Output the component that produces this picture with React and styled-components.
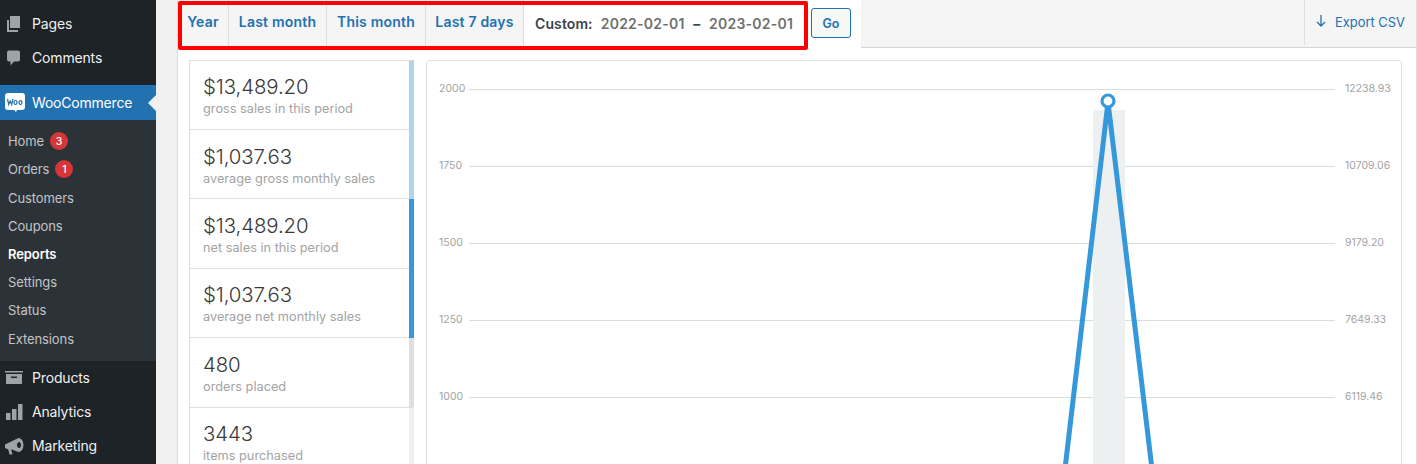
import React from "react";
import styled, { createGlobalStyle } from "styled-components";

const Global = createGlobalStyle`
  html, body { margin: 0; padding: 0; background: #f0f0f1; }
  * { box-sizing: border-box; }
`;

const Page = styled.div`
  width: 1417px; height: 464px; overflow: hidden; display: flex; position: relative;
  font-family: Inter, "Noto Sans", sans-serif; background: #f0f0f1;
`;
const Sidebar = styled.nav`
  width: 156px; flex: none; background: #1d2327; padding-top: 7px; height: 464px; overflow: hidden;
`;
const MenuItem = styled.div`
  height: 34px; display: flex; align-items: center; position: relative;
  padding-left: 32px; padding-bottom: 2px;
  font-size: 14px; color: #f0f0f1; letter-spacing: -0.16px;
  background: ${p => p.$active ? "#2271b1" : "transparent"};
  ${p => p.$active && "height:35px; margin-top:10px; color:#fff; padding-bottom:0; letter-spacing:-0.2px;"}
`;
const MenuIcon = styled.svg`
  position: absolute; left: 5px; top: 7px; width: 20px; height: 20px; fill: #9ea3a8;
`;
const Notch = styled.span`
  position: absolute; right: 0; top: 10px; width: 0; height: 0;
  border-top: 8px solid transparent; border-bottom: 8px solid transparent; border-right: 8px solid #f0f0f1;
`;
const SubMenu = styled.div`
  background: #2c3338; height: 241px; padding-top: 7.2px;
`;
const SubItem = styled.div`
  height: 28.2px; display: flex; align-items: center; padding-left: 8px; gap: 6px;
  font-size: 13px; letter-spacing: -0.1px; color: ${p => p.$current ? "#fff" : "#c3c4c7"};
  font-weight: ${p => p.$current ? 600 : 400};
`;
const Badge = styled.span`
  width: 18px; height: 18px; border-radius: 50%; background: #d63638; color: #fff;
  font-size: 10.5px; display: flex; align-items: center; justify-content: center; font-weight: 500;
`;
const Main = styled.main`
  flex: 1; padding-left: 21px; display: flex; min-width: 0;
`;
const Panel = styled.div`
  flex: 1; background: #fff; border-left: 1px solid #dcdcde; border-right: 1px solid #dcdcde; display: flex; flex-direction: column; min-width: 0;
`;
const TabBar = styled.div`
  height: 48px; flex: none; display: flex; background: #fff;
`;
const Tab = styled.a`
  height: 47px; background: #f5f5f5; display: flex; align-items: center; justify-content: center; padding-bottom: 3px;
  width: ${p => p.$w}px; border-right: 1px solid #dfdfdf; border-bottom: 1px solid #dfdfdf;
  color: #2271b1; font-size: 14px; font-weight: 600; letter-spacing: 0.2px;
`;
const Custom = styled.div`
  width: 287px; height: 47px; display: flex; align-items: center; padding: 0 0 1px 11px; gap: 8px;
  font-size: 14px; font-weight: 600; color: #3c434a; background: #fff; white-space: pre; letter-spacing: 0.1px;
`;
const DateText = styled.span`color: #6f6f6f; letter-spacing: 0.25px;`;
const Dash = styled.b`color: #3c434a; font-weight: 700; margin: 0 8.5px;`;
const GoCell = styled.div`
  width: 50px; height: 47px; padding-top: 8px; background: #fff;
`;
const GoButton = styled.button`
  width: 40px; height: 30px; border: 1px solid #2271b1; border-radius: 3px; background: #f6f7f7; color: #2271b1;
  font: 600 12.5px Inter, sans-serif; padding: 0;
`;
const Spacer = styled.div`
  flex: 1; height: 48px; background: #f5f5f5; border-bottom: 1px solid #d5d5d5;
`;
const Export = styled.a`
  width: 112px; height: 48px; background: #f5f5f5; border-bottom: 1px solid #d5d5d5; position: relative;
  display: flex; align-items: center; padding: 0 0 3px 31px; color: #2271b1; font-size: 12.9px;
  &::before { content: ""; position: absolute; left: 0; top: 0; height: 45px; width: 1px; background: #dfdfdf; }
`;
const ExportIcon = styled.svg`
  position: absolute; left: 11px; top: 14px; width: 12px; height: 13px; fill: none; stroke: #2271b1; stroke-width: 1.3;
`;
const Body = styled.div`
  flex: 1; display: flex; padding: 12px 14px 0 11px; gap: 12px; min-height: 0;
`;
const Stats = styled.ul`
  list-style: none; margin: 0; padding: 0; width: 225px; flex: none;
`;
const Stat = styled.li`
  height: 69.4px; background: #fff; border-left: 1px solid #dfdfdf; border-right: 5px solid ${p => p.$color};
  padding: 13.5px 0 0 13px; position: relative;
  &:first-child { height: 70px; border-top: 1px solid #dfdfdf; padding-top: 13px; }
  &::after { content: ""; position: absolute; left: 0; right: 0; bottom: 0; height: 1px; background: #dfdfdf; }
`;
const Amount = styled.div`
  font-size: 20.4px; line-height: 26px; font-weight: 300; color: #3a3a3a; letter-spacing: -0.1px;
`;
const StatLabel = styled.div`
  font-size: 12.75px; line-height: 17px; color: #a3a3a3;
`;
const ChartBox = styled.div`
  flex: 1; height: 440px; background: #fff; border: 1px solid #dfdfdf; border-radius: 4px 4px 0 0; min-width: 0; overflow: hidden;
`;
const ChartSvg = styled.svg`
  display: block; width: 975px; height: 404px;
  text { font-family: Inter, sans-serif; font-size: 10.5px; fill: #a3a3a3; }
`;
const Highlight = styled.div`
  position: absolute; left: 178px; top: 1px; width: 630px; height: 49px;
  border: 4px solid #fe0000; border-radius: 2px; pointer-events: none;
`;

const rows = [
  ["2000", "12238.93", 28],
  ["1750", "10709.06", 105],
  ["1500", "9179.20", 182],
  ["1250", "7649.33", 259],
  ["1000", "6119.46", 336],
];
const stats = [
  ["$13,489.20", "gross sales in this period", "#b1d4ea"],
  ["$1,037.63", "average gross monthly sales", "#b1d4ea"],
  ["$13,489.20", "net sales in this period", "#3498db"],
  ["$1,037.63", "average net monthly sales", "#3498db"],
  ["480", "orders placed", "#dbe1e3"],
  ["3443", "items purchased", "#ecf0f1"],
];

function Chart() {
  return (
    <ChartSvg viewBox="0 0 975 404">
      {rows.map(([l, r, y]) => (
        <g key={l}>
          <text x="12" y={y + 3}>{l}</text>
          <line x1="42" x2="908" y1={y + 0.5} y2={y + 0.5} stroke="#d9dddd" strokeWidth="1" />
          <text x="918" y={y + 3}>{r}</text>
        </g>
      ))}
      <rect x="666" y="49" width="32" height="355" fill="#ecf0f1" />
      <polyline points="638,408 681,41 725,408" fill="none" stroke="#3498db" strokeWidth="5" strokeLinejoin="miter" />
      <circle cx="681" cy="40" r="6" fill="#fff" stroke="#3498db" strokeWidth="3.2" />
    </ChartSvg>
  );
}

export default function App() {
  return (
    <Page>
      <Global />
      <Sidebar>
        <MenuItem>
          <MenuIcon viewBox="0 0 20 20"><path d="M5 2h10v12H5z" /><path d="M2 6h2v10h9v2H2z" /></MenuIcon>
          Pages
        </MenuItem>
        <MenuItem>
          <MenuIcon viewBox="0 0 20 20"><path d="M4 2.5h9a2 2 0 0 1 2 2v7a2 2 0 0 1-2 2H9l-3.5 4V13.500H4a2 2 0 0 1-2-2v-7a2 2 0 0 1 2-2z" /></MenuIcon>
          Comments
        </MenuItem>
        <MenuItem $active>
          <MenuIcon viewBox="0 0 20 20" style={{ fill: "#fff" }}>
            <path d="M3 1h14a3 3 0 0 1 3 3v11a3 3 0 0 1-3 3h-5l-1 2-2-2H3a3 3 0 0 1-3-3V4a3 3 0 0 1 3-3z" />
            <path d="M2.500 7l1.200 5.500 1.500-3.500 1.500 3.500 1.200-5.500M10.500 8.500a1.500 2 0 1 0 .01 0M15.500 8.500a1.500 2 0 1 0 .01 0" fill="none" stroke="#2271b1" strokeWidth="1.200" />
          </MenuIcon>
          WooCommerce
          <Notch />
        </MenuItem>
        <SubMenu>
          <SubItem>Home <Badge>3</Badge></SubItem>
          <SubItem>Orders <Badge>1</Badge></SubItem>
          <SubItem>Customers</SubItem>
          <SubItem>Coupons</SubItem>
          <SubItem $current>Reports</SubItem>
          <SubItem>Settings</SubItem>
          <SubItem>Status</SubItem>
          <SubItem>Extensions</SubItem>
        </SubMenu>
        <div>
          <MenuItem>
            <MenuIcon viewBox="0 0 18 20" style={{ width: 18 }}><path d="M0 3h18v1.500H0z" /><path d="M1 6h16v10H1zM6 8.500V10h6V8.500z" fillRule="evenodd" /></MenuIcon>
            Products
          </MenuItem>
          <MenuItem>
            <MenuIcon viewBox="0 0 20 20"><path d="M1 11h4.500v7H1zM7 7h4.500v11H7zM13 2h4.500v16H13z" /></MenuIcon>
            Analytics
          </MenuItem>
          <MenuItem>
            <MenuIcon viewBox="0 0 20 20"><path d="M13.500 2a5 7 0 1 1 0 14 5 7 0 0 1-1.500-.4L7 13.500l-.8.300 1.300 4.700H4.500L3.300 13.500 0 12V8.500zM14 6a2 3 0 1 0 .01 0" fillRule="evenodd" /></MenuIcon>
            Marketing
          </MenuItem>
        </div>
      </Sidebar>
      <Main>
        <Panel>
          <TabBar>
            <Tab $w={51}>Year</Tab>
            <Tab $w={98}>Last month</Tab>
            <Tab $w={99}>This month</Tab>
            <Tab $w={98}>Last 7 days</Tab>
            <Custom>
              <span>Custom:</span>
              <DateText>2022-02-01<Dash>–</Dash>2023-02-01</DateText>
            </Custom>
            <GoCell><GoButton>Go</GoButton></GoCell>
            <Spacer />
            <Export>
              <ExportIcon viewBox="0 0 12 13"><path d="M6 1v11M2 8l4 4 4-4" /></ExportIcon>
              Export CSV
            </Export>
          </TabBar>
          <Body>
            <Stats>
              {stats.map(([a, l, c], i) => (
                <Stat key={i} $color={c}>
                  <Amount>{a}</Amount>
                  <StatLabel>{l}</StatLabel>
                </Stat>
              ))}
            </Stats>
            <ChartBox><Chart /></ChartBox>
          </Body>
        </Panel>
      </Main>
      <Highlight />
    </Page>
  );
}
